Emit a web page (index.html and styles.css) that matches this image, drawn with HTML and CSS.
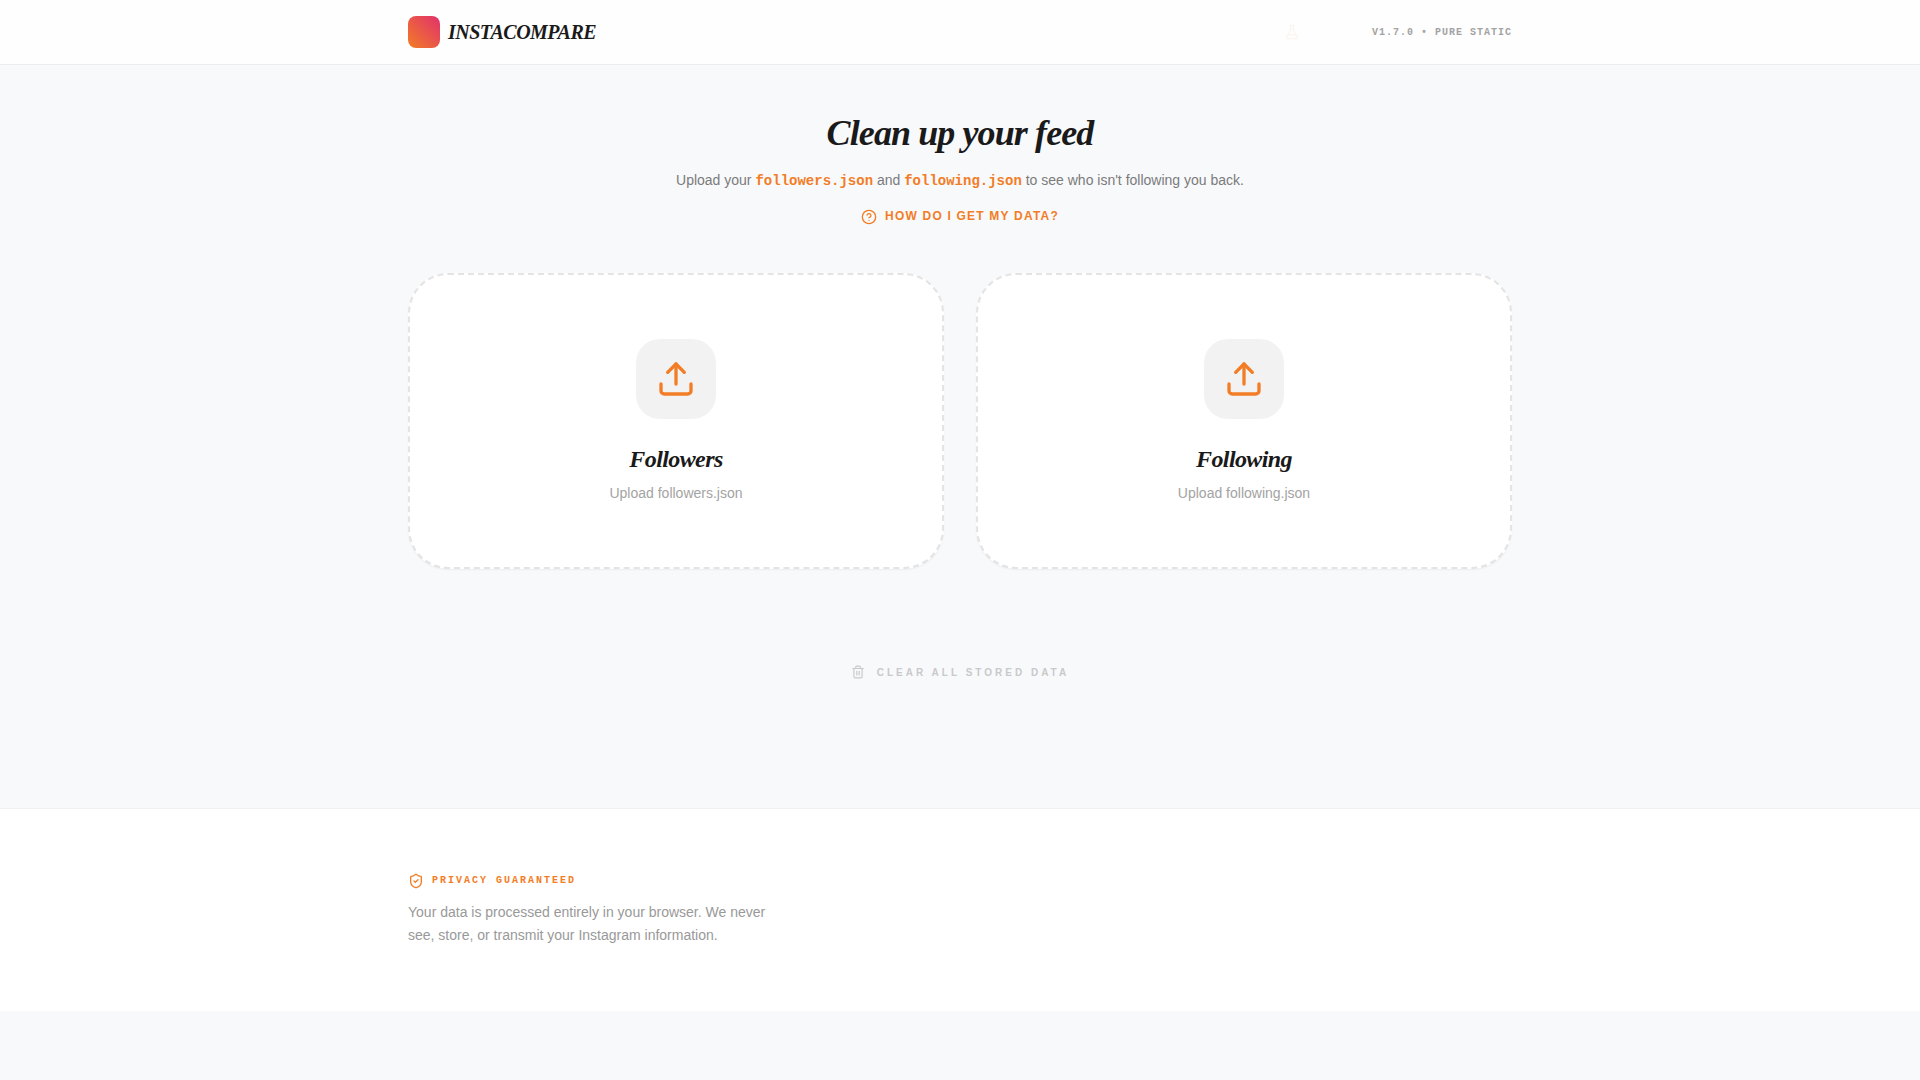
FILE: index.html
```html
<!DOCTYPE html>
<html lang="en">
<head>
    <meta charset="UTF-8">
    <meta name="viewport" content="width=device-width, initial-scale=1.0">
    <title>InstaCompare</title>
    <link rel="stylesheet" href="styles.css">
</head>
<body>
<header class="header">
    <div class="container header-inner">
        <div class="brand">
            <span class="brand-mark"></span>
            <span class="brand-name">INSTACOMPARE</span>
        </div>
        <div class="header-right">
            <button type="button" class="test-btn" aria-label="Load test data">
                <svg class="icon" width="16" height="16" viewBox="0 0 24 24">
                    <path d="M10 2v7.31L3.7 20.2a1.2 1.2 0 0 0 1 1.8h14.6a1.2 1.2 0 0 0 1-1.8L14 9.3V2"/>
                    <path d="M8.5 2h7"/>
                    <path d="M6 16h12"/>
                </svg>
            </button>
            <span class="version">V1.7.0 • PURE STATIC</span>
        </div>
    </div>
</header>

<main class="container main">
    <section class="hero">
        <h1>Clean up your feed</h1>
        <p>Upload your <code>followers.json</code> and <code>following.json</code> to see who isn't following you back.</p>
        <button type="button" class="help-btn">
            <svg class="icon" width="16" height="16" viewBox="0 0 24 24">
                <circle cx="12" cy="12" r="10"/>
                <path d="M9.09 9a3 3 0 0 1 5.83 1c0 2-3 3-3 3"/>
                <path d="M12 17h.01"/>
            </svg>
            HOW DO I GET MY DATA?
        </button>
    </section>

    <section class="uploads">
        <label class="card" for="followers">
            <input type="file" id="followers" accept=".json">
            <span class="card-icon">
                <svg class="icon" width="40" height="40" viewBox="0 0 24 24">
                    <path d="M21 15v4a2 2 0 0 1-2 2H5a2 2 0 0 1-2-2v-4"/>
                    <path d="M17 8l-5-5-5 5"/>
                    <path d="M12 3v12"/>
                </svg>
            </span>
            <span class="card-title">Followers</span>
            <span class="card-text">Upload followers.json</span>
        </label>
        <label class="card" for="following">
            <input type="file" id="following" accept=".json">
            <span class="card-icon">
                <svg class="icon" width="40" height="40" viewBox="0 0 24 24">
                    <path d="M21 15v4a2 2 0 0 1-2 2H5a2 2 0 0 1-2-2v-4"/>
                    <path d="M17 8l-5-5-5 5"/>
                    <path d="M12 3v12"/>
                </svg>
            </span>
            <span class="card-title">Following</span>
            <span class="card-text">Upload following.json</span>
        </label>
    </section>

    <button type="button" class="clear-btn">
        <svg class="icon" width="14" height="14" viewBox="0 0 24 24">
            <path d="M3 6h18"/>
            <path d="M19 6v14c0 1-1 2-2 2H7c-1 0-2-1-2-2V6"/>
            <path d="M8 6V4c0-1 1-2 2-2h4c1 0 2 1 2 2v2"/>
            <path d="M10 11v6"/>
            <path d="M14 11v6"/>
        </svg>
        CLEAR ALL STORED DATA
    </button>
</main>

<footer class="footer">
    <div class="container">
        <div class="privacy-title">
            <svg class="icon" width="16" height="16" viewBox="0 0 24 24">
                <path d="M20 13c0 5-3.5 7.5-7.66 8.95a1 1 0 0 1-.67-.01C7.5 20.5 4 18 4 13V6a1 1 0 0 1 1-1c2 0 4.5-1.2 6.24-2.72a1.17 1.17 0 0 1 1.52 0C14.51 3.81 17 5 19 5a1 1 0 0 1 1 1z"/>
                <path d="M9 12l2 2 4-4"/>
            </svg>
            <span>PRIVACY GUARANTEED</span>
        </div>
        <p class="privacy-text">Your data is processed entirely in your browser. We never see, store, or transmit your Instagram information.</p>
    </div>
</footer>
</body>
</html>
```
FILE: styles.css
```css
* {
    box-sizing: border-box;
    margin: 0;
    padding: 0;
}

body {
    background: #f8f9fb;
    color: #1a1a1a;
    font-family: "Liberation Sans", Arial, sans-serif;
    font-size: 14px;
}

button {
    border: 0;
    background: none;
    font-family: inherit;
    cursor: pointer;
}

.icon {
    display: block;
    flex-shrink: 0;
    fill: none;
    stroke: currentColor;
    stroke-width: 2;
    stroke-linecap: round;
    stroke-linejoin: round;
}

.container {
    max-width: 1152px;
    margin: 0 auto;
    padding: 0 24px;
}

/* header */
.header {
    background: #fefefe;
    border-bottom: 1px solid #ececee;
}

.header-inner {
    display: flex;
    align-items: center;
    justify-content: space-between;
    height: 64px;
}

.brand {
    display: flex;
    align-items: center;
    gap: 8px;
}

.brand-mark {
    width: 32px;
    height: 32px;
    border-radius: 8px;
    background: linear-gradient(45deg, #f27d26, #e1306c);
}

.brand-name {
    font: italic bold 20px/28px "Liberation Serif", Georgia, serif;
    letter-spacing: -0.025em;
}

.header-right {
    display: flex;
    align-items: center;
    gap: 72px;
}

.test-btn {
    color: #f27d26;
    opacity: 0.06;
}

.version {
    color: #a3a3a3;
    font: bold 10px/15px "Liberation Mono", "Courier New", monospace;
    letter-spacing: 1px;
}

/* hero */
.main {
    padding-top: 48px;
    padding-bottom: 112px;
}

.hero {
    display: flex;
    flex-direction: column;
    align-items: center;
    gap: 16px;
    margin-bottom: 48px;
    text-align: center;
}

.hero h1 {
    font: italic bold 36px/40px "Liberation Serif", Georgia, serif;
    letter-spacing: -0.025em;
}

.hero p {
    color: #7b7b7c;
    line-height: 22px;
}

.hero code {
    color: #f27d26;
    font: bold 14px/20px "Liberation Mono", "Courier New", monospace;
}

.help-btn {
    display: flex;
    align-items: flex-end;
    gap: 8px;
    color: #f27d26;
    font-size: 12px;
    font-weight: bold;
    line-height: 18px;
    letter-spacing: 0.1em;
}

/* upload cards */
.uploads {
    display: grid;
    grid-template-columns: repeat(2, 1fr);
    gap: 32px;
}

.card {
    position: relative;
    display: flex;
    flex-direction: column;
    align-items: center;
    padding: 64px;
    border: 2px dashed #e4e4e4;
    border-radius: 40px;
    background: #fff;
    box-shadow: 0 1px 2px rgba(0, 0, 0, 0.05);
    cursor: pointer;
}

.card input {
    position: absolute;
    width: 1px;
    height: 1px;
    opacity: 0;
}

.card-icon {
    display: flex;
    align-items: center;
    justify-content: center;
    width: 80px;
    height: 80px;
    margin-bottom: 24px;
    border-radius: 24px;
    background: #f2f2f2;
    color: #f27d26;
}

.card-title {
    margin-bottom: 8px;
    font: italic bold 24px/32px "Liberation Serif", Georgia, serif;
    letter-spacing: -0.025em;
}

.card-text {
    color: #a3a3a3;
    line-height: 20px;
}

.clear-btn {
    display: flex;
    align-items: flex-start;
    gap: 12px;
    margin: 80px auto 0;
    padding: 16px;
    color: #c8c9ca;
    font-size: 10px;
    font-weight: bold;
    line-height: 15px;
    letter-spacing: 3px;
}

/* footer */
.footer {
    padding: 64px 0;
    border-top: 1px solid #f0f0f0;
    background: #fff;
}

.privacy-title {
    display: flex;
    align-items: flex-start;
    gap: 8px;
    margin-bottom: 12px;
    color: #f27d26;
    font: bold 10px/15px "Liberation Mono", "Courier New", monospace;
    letter-spacing: 2px;
}

.privacy-text {
    max-width: 384px;
    color: #999;
    line-height: 23px;
}

@media (max-width: 768px) {
    .uploads {
        grid-template-columns: 1fr;
    }
}
```
